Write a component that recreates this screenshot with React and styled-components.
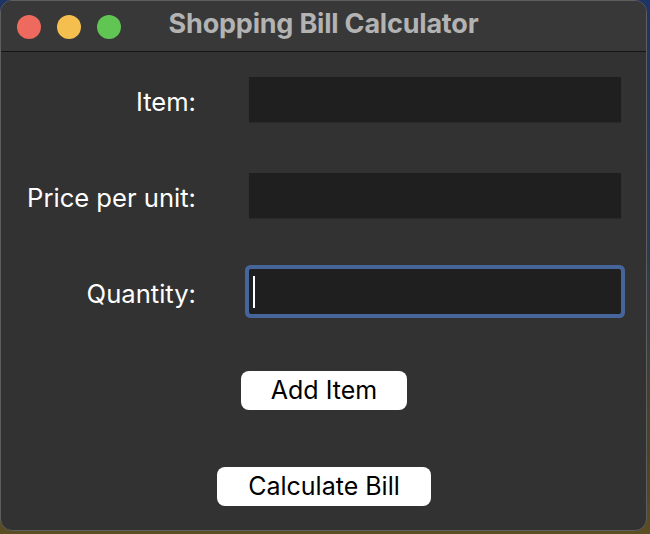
import styled, { createGlobalStyle } from "styled-components";

const GlobalStyle = createGlobalStyle`
  html, body {
    margin: 0;
    padding: 0;
  }
  body {
    width: 650px;
    height: 534px;
    overflow: hidden;
    background: linear-gradient(180deg, #1d3566 0%, #2a3a50 45%, #4a4324 85%, #5a4e22 100%);
    font-family: Inter, "Liberation Sans", sans-serif;
  }
`;

const Window = styled.div`
  width: 645px;
  height: 529px;
  background: #323232;
  border: 1px solid #5e5e5e;
  border-radius: 12px;
  overflow: hidden;
  display: flex;
  flex-direction: column;
`;

const TitleBar = styled.div`
  height: 50px;
  background: #383838;
  border-bottom: 1px solid #141414;
  display: flex;
  align-items: center;
  position: relative;
  padding-left: 16px;
  gap: 16px;
`;

const Light = styled.span`
  width: 24px;
  height: 24px;
  border-radius: 50%;
  background: ${(p) => p.$color};
  margin-top: 2px;
`;

const Title = styled.div`
  position: absolute;
  left: 0;
  right: 0;
  top: 6px;
  text-align: center;
  font-weight: 700;
  font-size: 27px;
  letter-spacing: -0.2px;
  color: #b3b3b3;
  pointer-events: none;
`;

const Body = styled.div`
  flex: 1;
  display: flex;
  flex-direction: column;
  align-items: center;
  padding-top: 25px;
`;

const Form = styled.div`
  display: grid;
  grid-template-columns: 195px 372px;
  grid-auto-rows: 45px;
  column-gap: 53px;
  row-gap: 51px;
  align-self: flex-start;
`;

const Label = styled.div`
  text-align: right;
  align-self: center;
  color: #ffffff;
  font-size: 25.6px;
  padding-top: 3px;
`;

const Field = styled.div`
  background: #1f1f1f;
  display: flex;
  align-items: center;
  padding-left: 4px;
  border-radius: ${(p) => (p.$focused ? "2px" : "0")};
  box-shadow: ${(p) => (p.$focused ? "0 0 0 4px #46659a" : "0 1px 1px rgba(0,0,0,0.15)")};
`;

const Caret = styled.span`
  width: 2px;
  height: 32px;
  background: #ffffff;
`;

const Button = styled.button`
  height: 39px;
  width: ${(p) => p.$w}px;
  margin-top: ${(p) => p.$mt}px;
  margin-left: 1px;
  border: none;
  border-radius: 8px;
  background: #ffffff;
  color: #000000;
  font-family: Inter, "Liberation Sans", sans-serif;
  font-size: 25px;
  line-height: 39px;
  padding: 0;
`;

export default function App() {
  return (
    <>
      <GlobalStyle />
      <Window>
        <TitleBar>
          <Light $color="#ee6a5f" />
          <Light $color="#f5bf4f" />
          <Light $color="#61c554" />
          <Title>Shopping Bill Calculator</Title>
        </TitleBar>
        <Body>
          <Form>
            <Label>Item:</Label>
            <Field />
            <Label>Price per unit:</Label>
            <Field />
            <Label>Quantity:</Label>
            <Field $focused>
              <Caret />
            </Field>
          </Form>
          <Button $w={166} $mt={57}>Add Item</Button>
          <Button $w={214} $mt={57}>Calculate Bill</Button>
        </Body>
      </Window>
    </>
  );
}
